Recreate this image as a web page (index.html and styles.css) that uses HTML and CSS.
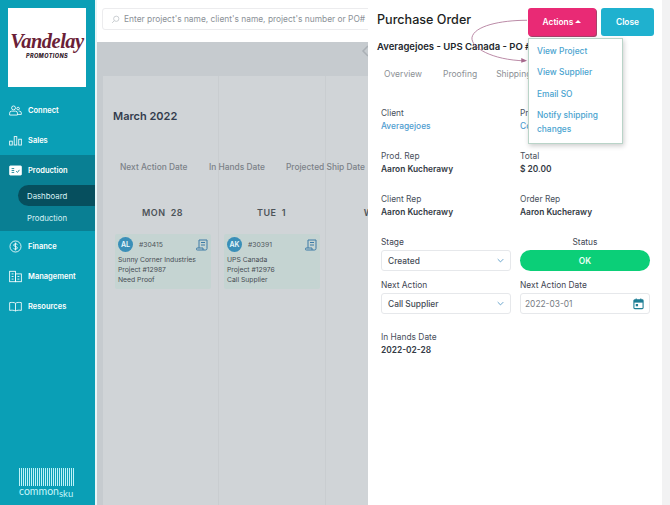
FILE: index.html
```html
<!DOCTYPE html>
<html lang="en">
<head>
<meta charset="utf-8">
<title>Purchase Order</title>
<link rel="stylesheet" href="styles.css">
</head>
<body>
<div class="app">
  <aside class="sidebar">
    <div class="logo">
      <span class="logo-script">Vandelay</span>
      <span class="logo-sub">PROMOTIONS</span>
    </div>
    <nav class="nav">
      <div class="nav-item">
        <svg class="nav-icon" viewBox="0 0 20 16"><circle cx="7" cy="4" r="3"/><circle cx="14" cy="5" r="2"/><path d="M1 15v-3a3 3 0 0 1 3-3h6a3 3 0 0 1 3 3v3zM15 9h1a3 3 0 0 1 3 3v2h-6"/></svg>
        <span>Connect</span>
      </div>
      <div class="nav-item">
        <svg class="nav-icon" viewBox="0 0 20 16"><rect x="1" y="9" width="4" height="6"/><rect x="8" y="2" width="4" height="13"/><rect x="15" y="6" width="4" height="9"/></svg>
        <span>Sales</span>
      </div>
      <div class="nav-group">
        <div class="nav-item">
          <svg class="nav-icon filled" viewBox="0 0 20 16"><rect x="1" y="1" width="18" height="14" rx="1"/><path class="cut" d="M4 5h4M4 8h4M4 11h4M11 9l2 2 3-4"/></svg>
          <span>Production</span>
        </div>
        <div class="sub-item active">Dashboard</div>
        <div class="sub-item">Production</div>
      </div>
      <div class="nav-item">
        <svg class="nav-icon" viewBox="0 0 20 20"><circle cx="10" cy="10" r="8.5"/><path d="M13 7c-1-1.500-6-1.500-6 .8 0 2.700 6 1.500 6 4.400 0 2.300-5 2.300-6 .8M10 4v12"/></svg>
        <span>Finance</span>
      </div>
      <div class="nav-item">
        <svg class="nav-icon" viewBox="0 0 20 18"><rect x="1" y="1" width="9" height="16"/><rect x="10" y="5" width="9" height="12"/><path d="M4 5h3M4 9h3M4 13h3M13 9h3M13 13h3"/></svg>
        <span>Management</span>
      </div>
      <div class="nav-item">
        <svg class="nav-icon" viewBox="0 0 20 16"><path d="M10 3C8 1.500 4 1.500 1 2v12c3-.5 7-.5 9 1 2-1.500 6-1.500 9-1V2c-3-.5-7-.5-9 1zM10 3v12"/></svg>
        <span>Resources</span>
      </div>
    </nav>
    <div class="brand">
      <div class="barcode"></div>
      <div class="brand-name">common<small>sku</small></div>
    </div>
  </aside>

  <main class="main">
    <div class="search">
      <div class="search-box">
        <svg class="search-icon" viewBox="0 0 12 12"><circle cx="7" cy="5" r="3.500"/><path d="M4.500 7.500 1.500 10.500"/></svg>
        <span>Enter project's name, client's name, project's number or PO#</span>
      </div>
    </div>
    <div class="dim">
      <div class="dim-top"><svg class="chev" viewBox="0 0 8 12"><path d="M7 1 2 6l5 5"/></svg></div>
      <div class="calendar">
        <h2 class="month">March 2022</h2>
        <div class="filters">
          <span class="f1">Next Action Date</span>
          <span class="f2">In Hands Date</span>
          <span class="f3">Projected Ship Date</span>
        </div>
        <div class="days">
          <section class="day">
            <h3 class="day-name">MON&nbsp; 28</h3>
            <article class="card">
              <div class="card-head">
                <span class="avatar">AL</span>
                <span class="po">#30415</span>
                <svg class="card-icon" viewBox="0 0 12 12"><path d="M3 1h8v8.500a1.500 1.500 0 0 1-1.500 1.500H1.500A1 1 0 0 1 1 9h6v2M3 9V1M5 3.500h4M5 6h4"/></svg>
              </div>
              <p>Sunny Corner Industries</p>
              <p>Project #12987</p>
              <p>Need Proof</p>
            </article>
          </section>
          <section class="day">
            <h3 class="day-name">TUE&nbsp; 1</h3>
            <article class="card">
              <div class="card-head">
                <span class="avatar">AK</span>
                <span class="po">#30391</span>
                <svg class="card-icon" viewBox="0 0 12 12"><path d="M3 1h8v8.500a1.500 1.500 0 0 1-1.500 1.500H1.500A1 1 0 0 1 1 9h6v2M3 9V1M5 3.500h4M5 6h4"/></svg>
              </div>
              <p>UPS Canada</p>
              <p>Project #12976</p>
              <p>Call Supplier</p>
            </article>
          </section>
          <section class="day">
            <h3 class="day-name">WED&nbsp; 2</h3>
          </section>
        </div>
      </div>
    </div>
  </main>

  <section class="panel">
    <header class="panel-head">
      <h1 class="panel-title">Purchase Order</h1>
      <button class="btn btn-actions">Actions <i class="caret"></i></button>
      <button class="btn btn-close">Close</button>
    </header>
    <div class="subtitle">Averagejoes - UPS Canada - PO #30391</div>
    <div class="tabs">
      <span>Overview</span><span>Proofing</span><span>Shipping</span>
    </div>
    <div class="fields">
      <div class="field"><label>Client</label><a>Averagejoes</a></div>
      <div class="field"><label>Project</label><a>Conference Swag #12976</a></div>
      <div class="field"><label>Prod. Rep</label><b>Aaron Kucherawy</b></div>
      <div class="field"><label>Total</label><b>$ 20.00</b></div>
      <div class="field"><label>Client Rep</label><b>Aaron Kucherawy</b></div>
      <div class="field"><label>Order Rep</label><b>Aaron Kucherawy</b></div>
    </div>
    <div class="forms">
      <div class="control"><label>Stage</label>
        <div class="select">Created<svg viewBox="0 0 10 6"><path d="M1 1l4 4 4-4"/></svg></div>
      </div>
      <div class="control"><label class="centered">Status</label>
        <div class="status">OK</div>
      </div>
      <div class="control"><label>Next Action</label>
        <div class="select">Call Supplier<svg viewBox="0 0 10 6"><path d="M1 1l4 4 4-4"/></svg></div>
      </div>
      <div class="control"><label>Next Action Date</label>
        <div class="select date">2022-03-01
          <svg class="cal" viewBox="0 0 12 12"><path class="cal-fill" d="M1 1.500h10v3H1z"/><rect x="1" y="1.500" width="10" height="9.500" rx="1"/><path d="M3.500 0v2M8.500 0v2"/><rect class="cal-fill" x="3" y="6" width="2.500" height="2.500"/></svg>
        </div>
      </div>
    </div>
    <div class="field hands"><label>In Hands Date</label><b>2022-02-28</b></div>

    <div class="menu">
      <a>View Project</a>
      <a>View Supplier</a>
      <a>Email SO</a>
      <a>Notify shipping changes</a>
    </div>
    <svg class="arrow" viewBox="0 0 60 50"><path d="M58 2C30 2 3 8 1 20c-1 10 20 23 55 24"/><path class="head" d="M52 41l6 3-6 2z"/></svg>
  </section>
  <div class="gutter"></div>
</div>
</body>
</html>
```
FILE: styles.css
```css
* { box-sizing: border-box; }
html, body { margin: 0; height: 100%; overflow: hidden; }
body { font-family: Inter, Lato, sans-serif; color: #2f3a4a; background: #fff; }
.app { display: flex; width: 670px; height: 505px; }

/* sidebar */
.sidebar { width: 95px; flex: none; background: #0a9fb6; padding-top: 8px; display: flex; flex-direction: column; color: #fff; }
.logo { width: 78px; height: 79px; margin-left: 8px; background: #fff; display: flex; flex-direction: column; align-items: center; padding-top: 21px; color: #6b1f38; }
.logo-script { font: italic bold 20.500px/24px "Liberation Serif", serif; letter-spacing: -.5px; }
.logo-sub { font: italic 800 5.500px/7px Inter, sans-serif; letter-spacing: .4px; color: #32202a; }
.nav { margin-top: 8px; }
.nav-item { height: 30px; display: flex; align-items: center; gap: 6px; padding-left: 9px; font-size: 7.500px; font-weight: 600; }
.nav-icon { width: 13px; height: 13px; flex: none; fill: none; stroke: #fff; stroke-width: 1.300; }
.nav-icon.filled { fill: #fff; }
.nav-icon .cut { stroke: #0a7c8f; fill: none; }
.nav-group { background: #097f93; padding-bottom: 3px; height: 76px; }
.sub-item { height: 21px; margin-left: 18px; padding-left: 9px; display: flex; align-items: center; font-size: 7.800px; color: #d8f2f5; }
.sub-item.active { background: #064f5e; border-radius: 11px 0 0 11px; }
.nav-group .sub-item + .sub-item { margin-top: 1px; }
.brand { margin-top: auto; margin-left: 19px; margin-bottom: 8px; width: 55px; color: #c4f5fa; }
.barcode { height: 18px; background: repeating-linear-gradient(90deg, #bdf2f8 0 1px, transparent 1px 2.300px, #bdf2f8 2.300px 3.300px, transparent 3.300px 4px); }
.brand-name { font: 400 10.500px/10px Lato, sans-serif; white-space: nowrap; }
.brand-name small { font-size: 9.500px; position: relative; top: 2px; }

/* main */
.main { width: 273px; flex: none; border-left: 2px solid #e6f6f8; display: flex; flex-direction: column; overflow: hidden; background: #c6cbcf; }
.search { height: 42px; flex: none; background: #fff; padding: 8px 0 0 5px; }
.search-box { height: 22px; width: 290px; display: flex; align-items: center; gap: 4px; padding-left: 8px; border: 1px solid #ececee; border-radius: 3px 0 0 3px; font-size: 8.400px; color: #8b9197; white-space: nowrap; }
.search-icon { width: 9px; height: 9px; flex: none; fill: none; stroke: #c5c9cd; stroke-width: 1.200; }
.dim { flex: 1; display: flex; flex-direction: column; min-height: 0; padding-left: 6px; }
.dim-top { height: 34px; flex: none; display: flex; justify-content: flex-end; padding-top: 3px; }
.chev { width: 8px; height: 12px; margin-right: -1px; fill: none; stroke: #aab0b5; stroke-width: 1.500; }
.calendar { flex: 1; background: linear-gradient(90deg, transparent 115px, #c9cdd0 115px 116px, transparent 116px 222px, #c9cdd0 222px 223px, transparent 223px), #d0d4d7; padding-left: 10px; overflow: hidden; }
.month { margin: 33px 0 0; font-size: 11px; line-height: 14px; font-weight: 600; color: #333c4d; }
.filters { display: flex; margin-top: 38px; font-size: 8.400px; line-height: 12px; color: #7b8187; font-weight: 500; white-space: nowrap; }
.f1 { margin-left: 7px; width: 89px; }
.f2 { width: 77px; }
.days { display: flex; margin: 33px 0 0 -10px; height: 260px; width: 300px; }
.day { width: 109px; flex: none; padding: 0 6px 0 12px; }
.day-name { margin: 0 0 14px; padding-left: 4px; text-align: center; font-size: 9px; line-height: 14px; font-weight: 600; color: #4d5359; letter-spacing: .4px; white-space: nowrap; }
.card { width: 96px; height: 55px; padding: 2px 3px; background: #c5d4d2; border-radius: 2px; }
.card p { margin: 0; font-size: 6.800px; line-height: 10px; color: #454c52; white-space: nowrap; }
.card-head { display: flex; align-items: center; height: 17px; margin-bottom: 2px; }
.avatar { width: 15px; height: 15px; border-radius: 50%; background: #3a8fb8; color: #eaf7fb; font-size: 7px; font-weight: 600; display: flex; align-items: center; justify-content: center; flex: none; }
.po { margin-left: 6px; font-size: 6.800px; color: #50565c; flex: 1; }
.card-icon { width: 12px; height: 12px; fill: none; stroke: #3d7ba6; stroke-width: 1; }

/* panel */
.panel { width: 294px; flex: none; position: relative; background: #fff; padding: 0 0 0 9px; overflow: hidden; }
.panel-head { display: flex; align-items: flex-start; height: 38px; padding-top: 8px; }
.panel-title { margin: 3px 0 0; font-size: 12.600px; line-height: 17px; font-weight: 500; color: #1d1f23; width: 151px; white-space: nowrap; }
.btn { border: 0; height: 28px; border-radius: 3px; color: #fff; font: 600 8.400px Inter, sans-serif; padding: 0; }
.btn-actions { width: 68px; background: #e92a75; margin-right: 5px; box-shadow: 1px 1px 0 #a5436a; }
.btn-close { width: 53px; background: #1fb1cf; }
.caret { display: inline-block; border: 3px solid transparent; border-bottom-color: #fff; border-top-width: 0; vertical-align: 2px; }
.subtitle { margin-top: 2px; font-size: 9.500px; line-height: 14px; font-weight: 600; color: #22262c; white-space: nowrap; }
.tabs { display: flex; margin-top: 13px; padding-left: 7px; gap: 21px; font-size: 8.500px; line-height: 14px; color: #8c9095; }
.tabs span:nth-child(2) { margin-right: -2px; }
.fields { display: grid; grid-template-columns: 130px 130px; column-gap: 9px; row-gap: 17px; margin: 26px 0 0 4px; }
.field label { display: block; font-size: 8.400px; line-height: 13px; color: #49505c; }
.field a, .field b { display: block; font-size: 8.400px; line-height: 13px; white-space: nowrap; }
.field a { color: #4d9ccf; font-weight: 500; }
.field b { color: #333a44; font-weight: 600; }
.forms { display: grid; grid-template-columns: 130px 130px; column-gap: 9px; row-gap: 8px; margin: 17px 0 0 4px; }
.control label { display: block; font-size: 8.400px; line-height: 12px; color: #3f4653; margin-bottom: 2px; }
.control label.centered { text-align: center; }
.select { height: 21px; border: 1px solid #e6e8eb; border-radius: 3px; padding: 0 6px; display: flex; align-items: center; justify-content: space-between; font-size: 8.400px; color: #444b55; font-weight: 500; }
.select svg { width: 7px; height: 5px; fill: none; stroke: #5a9bc7; stroke-width: 1.300; }
.date { color: #777c83; padding-left: 4px; font-weight: 400; }
.select .cal { width: 11px; height: 12px; stroke: #1f7e95; stroke-width: 1.200; margin-right: -1px; }
.cal-fill { fill: #1f7e95; stroke: none; }
.status { height: 21px; background: #0bcf78; border-radius: 11px; color: #eafff5; font-size: 8.400px; font-weight: 600; display: flex; align-items: center; justify-content: center; }
.hands { margin: 17px 0 0 4px; }

.menu { position: absolute; left: 160px; top: 38px; width: 95px; height: 106px; background: #fff; border: 1px solid #b9d4c8; box-shadow: 1px 2px 5px rgba(0,0,0,.2); padding: 5.500px 8px; display: flex; flex-direction: column; }
.menu a { color: #4aa3cf; font-size: 8.400px; font-weight: 500; line-height: 13.500px; margin-bottom: 8px; }
.arrow { position: absolute; left: 103px; top: 18px; width: 58px; height: 49px; fill: none; stroke: #a6688c; stroke-width: .8; }
.arrow .head { fill: #a6688c; stroke: none; }

.gutter { flex: 1; background: #f2f2f3; }
```
